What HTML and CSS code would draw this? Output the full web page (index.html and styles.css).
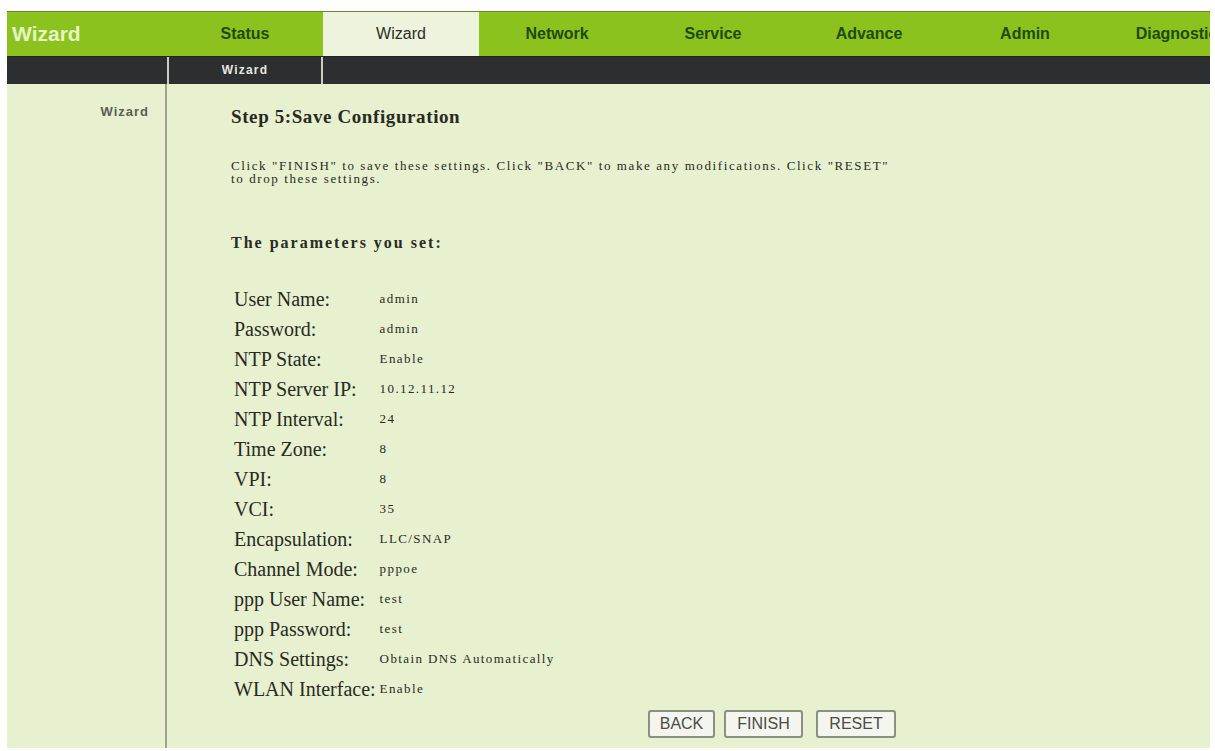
FILE: index.html
```html
<!DOCTYPE html>
<html>
<head>
<meta charset="utf-8">
<title>Wizard</title>
<link rel="stylesheet" href="styles.css">
</head>
<body>
<div class="frame">
  <div class="topbar">
    <div class="brand">Wizard</div>
    <nav class="tabs">
      <a class="tab">Status</a>
      <a class="tab active">Wizard</a>
      <a class="tab">Network</a>
      <a class="tab">Service</a>
      <a class="tab">Advance</a>
      <a class="tab">Admin</a>
      <a class="tab">Diagnostics</a>
    </nav>
  </div>
  <div class="subbar">
    <div class="sub-spacer"></div>
    <div class="subtab">Wizard</div>
  </div>
  <div class="main">
    <aside class="side">
      <div class="side-item">Wizard</div>
    </aside>
    <section class="content">
      <h1 class="step">Step 5:Save Configuration</h1>
      <p class="intro">Click "FINISH" to save these settings. Click "BACK" to make any modifications. Click "RESET"<br>to drop these settings.</p>
      <h2 class="params">The parameters you set:</h2>
      <table class="summary">
        <tr><td class="k">User Name:</td><td class="v">admin</td></tr>
        <tr><td class="k">Password:</td><td class="v">admin</td></tr>
        <tr><td class="k">NTP State:</td><td class="v">Enable</td></tr>
        <tr><td class="k">NTP Server IP:</td><td class="v">10.12.11.12</td></tr>
        <tr><td class="k">NTP Interval:</td><td class="v">24</td></tr>
        <tr><td class="k">Time Zone:</td><td class="v">8</td></tr>
        <tr><td class="k">VPI:</td><td class="v">8</td></tr>
        <tr><td class="k">VCI:</td><td class="v">35</td></tr>
        <tr><td class="k">Encapsulation:</td><td class="v">LLC/SNAP</td></tr>
        <tr><td class="k">Channel Mode:</td><td class="v">pppoe</td></tr>
        <tr><td class="k">ppp User Name:</td><td class="v">test</td></tr>
        <tr><td class="k">ppp Password:</td><td class="v">test</td></tr>
        <tr><td class="k">DNS Settings:</td><td class="v">Obtain DNS Automatically</td></tr>
        <tr><td class="k">WLAN Interface:</td><td class="v">Enable</td></tr>
      </table>
      <div class="actions">
        <button class="btn btn-back">BACK</button>
        <button class="btn btn-finish">FINISH</button>
        <button class="btn btn-reset">RESET</button>
      </div>
    </section>
  </div>
</div>
</body>
</html>
```

FILE: styles.css
```css
html, body {
  margin: 0;
  padding: 0;
  background: #ffffff;
}

.frame {
  margin: 11px 0 0 7px;
  width: 1203px;
  overflow: hidden;
  font-family: "Liberation Serif", "Times New Roman", serif;
  color: #272b23;
}

/* top navigation */
.topbar {
  display: flex;
  height: 44px;
  background: #8cc21e;
  border-top: 1px solid #6d8a2a;
}

.brand {
  flex: none;
  width: 160px;
  padding-left: 5px;
  box-sizing: border-box;
  font-family: "Liberation Sans", Arial, sans-serif;
  font-weight: bold;
  font-size: 21px;
  line-height: 44px;
  color: #e6f4c6;
}

.tabs {
  display: flex;
  flex-wrap: nowrap;
}

.tab {
  flex: none;
  width: 156px;
  text-align: center;
  font-family: "Liberation Sans", Arial, sans-serif;
  font-weight: bold;
  font-size: 16px;
  line-height: 44px;
  color: #1e4a0c;
  white-space: nowrap;
}

.tab.active {
  background: #eef3dd;
  color: #2a2f24;
  font-weight: normal;
}

/* second level bar */
.subbar {
  display: flex;
  height: 27px;
  background: #2c2e2f;
  border-top: 1px solid #23261f;
}

.sub-spacer {
  flex: none;
  width: 160px;
}

.subtab {
  flex: none;
  width: 152px;
  border-left: 2px solid #c9cdc2;
  border-right: 2px solid #c9cdc2;
  text-align: center;
  font-family: "Liberation Sans", Arial, sans-serif;
  font-weight: bold;
  font-size: 12px;
  letter-spacing: 1.2px;
  line-height: 27px;
  color: #e6e8e2;
}

/* body area */
.main {
  display: flex;
  height: 664px;
  background: #e7f0cf;
}

.side {
  flex: none;
  width: 158px;
  border-right: 2px solid #9da292;
  padding-top: 20px;
}

.side-item {
  text-align: right;
  padding-right: 16px;
  font-family: "Liberation Sans", Arial, sans-serif;
  font-weight: bold;
  font-size: 13px;
  letter-spacing: 1px;
  line-height: 16px;
  color: #5a6050;
}

.content {
  flex: 1;
  padding: 22px 0 0 64px;
}

.step {
  margin: 0;
  font-size: 19px;
  font-weight: bold;
  letter-spacing: 0.6px;
  line-height: 22px;
}

.intro {
  margin: 31px 0 0;
  font-size: 13px;
  letter-spacing: 1.6px;
  line-height: 13px;
}

.params {
  margin: 48px 0 0;
  font-size: 16px;
  font-weight: bold;
  letter-spacing: 2px;
  line-height: 20px;
}

.summary {
  margin: 31px 0 0 3px;
  border-collapse: collapse;
}

.summary td {
  padding: 0;
  height: 30px;
  vertical-align: middle;
}

.summary .k {
  font-size: 20px;
  letter-spacing: 0;
  padding-right: 4px;
  white-space: nowrap;
}

.summary .v {
  font-size: 13px;
  letter-spacing: 1.4px;
  white-space: nowrap;
}

.actions {
  display: flex;
  padding: 6px 0 0 417px;
}

.btn {
  height: 28px;
  padding: 0;
  background: #f3f5ee;
  border: 2px solid #8a9083;
  border-radius: 3px;
  font-family: "Liberation Sans", Arial, sans-serif;
  font-size: 16px;
  color: #4a4d47;
  text-align: center;
}

.btn-back {
  width: 67px;
}

.btn-finish {
  width: 79px;
  margin-left: 9px;
}

.btn-reset {
  width: 80px;
  margin-left: 13px;
}
```
